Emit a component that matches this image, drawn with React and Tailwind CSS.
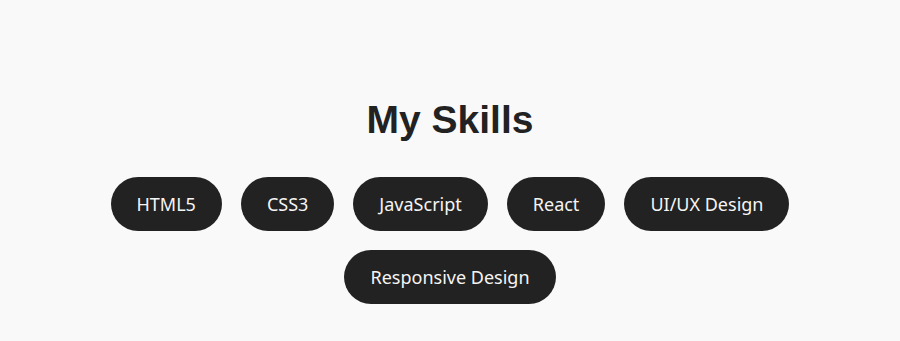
import React from 'react';

const skills = ['HTML5', 'CSS3', 'JavaScript', 'React', 'UI/UX Design', 'Responsive Design'];

export default function App() {
  return (
    <div className="min-h-[341px] bg-[#f9f9f9] flex flex-col items-center pt-[96px]">
      <h2 className="text-[39px] font-bold text-[#222] leading-[48px] font-['Liberation_Sans',Arial,sans-serif]">
        My Skills
      </h2>
      <div className="mt-[33px] flex flex-wrap justify-center gap-x-[19px] gap-y-[19px] max-w-[800px]">
        {skills.map((s) => (
          <span
            key={s}
            className="bg-[#222] text-[#f5f5f5] rounded-[27px] h-[54px] px-[26px] flex items-center text-[18px] font-['Noto_Sans',sans-serif]"
          >
            {s}
          </span>
        ))}
      </div>
    </div>
  );
}
